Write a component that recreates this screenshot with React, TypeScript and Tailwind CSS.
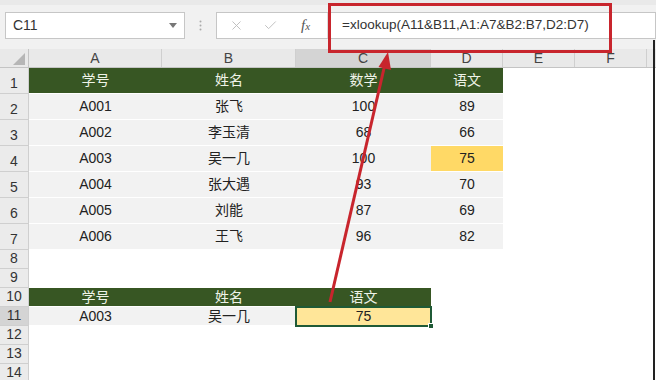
import { X, Check } from "lucide-react";

type Kind = "head" | "data" | "hot" | "sel" | "empty";
interface CellDef { text?: string; kind: Kind; }

const COLS = [
  { name: "A", w: "w-[133px]" },
  { name: "B", w: "w-[134px]" },
  { name: "C", w: "w-[135px]" },
  { name: "D", w: "w-[72px]" },
  { name: "E", w: "w-[72px]" },
  { name: "F", w: "w-[72px]" },
];

const KIND_CLASS: Record<Kind, string> = {
  head: "bg-[#375623] text-[#eef3e8] border-b border-white",
  data: "bg-[#f2f2f2] text-[#222] border-b border-white",
  hot: "bg-[#ffd966] text-[#222] border-b border-white",
  sel: "bg-[#ffe699] text-[#222] outline-2 outline-[#1f5a36] -outline-offset-1 relative",
  empty: "bg-white",
};

const students = [
  ["A001", "张飞", "100", "89"],
  ["A002", "李玉清", "68", "66"],
  ["A003", "吴一几", "100", "75"],
  ["A004", "张大遇", "93", "70"],
  ["A005", "刘能", "87", "69"],
  ["A006", "王飞", "96", "82"],
];

const e: CellDef = { kind: "empty" };

const rows: { n: number; h: string; cells: CellDef[] }[] = [
  { n: 1, h: "h-[26px]", cells: [...["学号", "姓名", "数学", "语文"].map((t) => ({ text: t, kind: "head" as Kind })), e, e] },
  ...students.map((s, i) => ({
    n: i + 2,
    h: "h-[26px]",
    cells: [...s.map((t, j) => ({ text: t, kind: (i === 2 && j === 3 ? "hot" : "data") as Kind })), e, e],
  })),
  { n: 8, h: "h-[19px]", cells: [e, e, e, e, e, e] },
  { n: 9, h: "h-[19px]", cells: [e, e, e, e, e, e] },
  { n: 10, h: "h-[19px]", cells: [{ text: "学号", kind: "head" }, { text: "姓名", kind: "head" }, { text: "语文", kind: "head" }, e, e, e] },
  { n: 11, h: "h-[19px]", cells: [{ text: "A003", kind: "data" }, { text: "吴一几", kind: "data" }, { text: "75", kind: "sel" }, e, e, e] },
  { n: 12, h: "h-[19px]", cells: [e, e, e, e, e, e] },
  { n: 13, h: "h-[19px]", cells: [e, e, e, e, e, e] },
  { n: 14, h: "h-[19px]", cells: [e, e, e, e, e, e] },
];

export default function App() {
  return (
    <div className="relative w-[656px] h-[380px] overflow-hidden bg-white font-['Liberation_Sans','Noto_Sans_CJK_SC',sans-serif] text-[14px]">
      {/* formula bar */}
      <div className="h-[49px] bg-[#f1f1f1] border-t-[5px] border-[#e9e9e9] flex items-start pt-[7px] pl-[5px]">
        <div className="w-[180px] h-[27px] bg-white border border-[#c6c6c6] flex items-center justify-between pl-[7px] pr-[7px] text-[#333]">
          <span>C11</span>
          <svg width="8" height="5" viewBox="0 0 8 5"><path d="M0 0h8L4 5z" fill="#777" /></svg>
        </div>
        <div className="w-[31px] h-[27px] flex items-center justify-center">
          <svg width="3" height="11" viewBox="0 0 3 11"><circle cx="1.5" cy="1.5" r="1" fill="#aaa" /><circle cx="1.5" cy="5.5" r="1" fill="#aaa" /><circle cx="1.5" cy="9.5" r="1" fill="#aaa" /></svg>
        </div>
        <div className="flex-1 h-[27px] bg-white border border-[#c6c6c6] flex items-center">
          <div className="w-[110px] flex items-center pl-[12px] gap-[19px] text-[#bdbdbd]">
            <X size={15} strokeWidth={1.5} />
            <Check size={15} strokeWidth={1.5} />
            <span className="font-['Liberation_Serif',serif] italic text-[#555] text-[15px] ml-[4px]">f<span className="text-[11px]">x</span></span>
          </div>
          <div className="flex-1 h-full border-l border-[#dcdcdc] pl-[14px] flex items-center text-[#333] text-[13.5px]">
            =xlookup(A11&amp;B11,A1:A7&amp;B2:B7,D2:D7)
          </div>
        </div>
      </div>

      {/* column header */}
      <div className="h-[19px] flex bg-[#e9e9e9] border-b border-[#c4c4c4] text-[#444]">
        <div className="w-[29px] relative border-r border-[#c4c4c4]">
          <svg className="absolute right-[3px] bottom-[2px]" width="12" height="12" viewBox="0 0 12 12"><path d="M12 0v12H0z" fill="#b6b6b6" /></svg>
        </div>
        {COLS.map((c) => (
          <div key={c.name} className={`${c.w} flex items-center justify-center border-r border-[#cfcfcf] ${c.name === "C" ? "bg-[#d4d4d4]" : ""}`}>{c.name}</div>
        ))}
        <div className="flex-1" />
      </div>

      {/* rows */}
      {rows.map((r) => (
        <div key={r.n} className={`${r.h} flex`}>
          <div className={`w-[29px] flex items-end justify-center pb-[1px] border-r border-b border-[#cfcfcf] text-[#333] leading-none ${r.n === 11 ? "bg-[#d4d4d4]" : "bg-[#ebebeb]"}`}>
            <span className="mb-[2px]">{r.n}</span>
          </div>
          {r.cells.map((c, i) => (
            <div key={i} className={`${COLS[i].w} flex items-center justify-center ${KIND_CLASS[c.kind]}`}>
              {c.text}
              {c.kind === "sel" && <span className="absolute -right-[3px] -bottom-[3px] w-[6px] h-[6px] bg-[#1f5a36] border border-white" />}
            </div>
          ))}
          <div className="flex-1" />
        </div>
      ))}

      {/* annotations */}
      <div className="absolute left-[328px] top-[3px] w-[284px] h-[50px] border-[3px] border-[#c8252d]" />
      <svg className="absolute inset-0 pointer-events-none" width="656" height="380">
        <line x1="330" y1="302" x2="385" y2="64" stroke="#c8252d" strokeWidth="3" />
        <polygon points="388,52 391,70 378.5,67" fill="#c8252d" />
      </svg>
      <div className="absolute right-[1px] top-[40px] bottom-0 w-[2px] bg-[#222]" />
    </div>
  );
}
